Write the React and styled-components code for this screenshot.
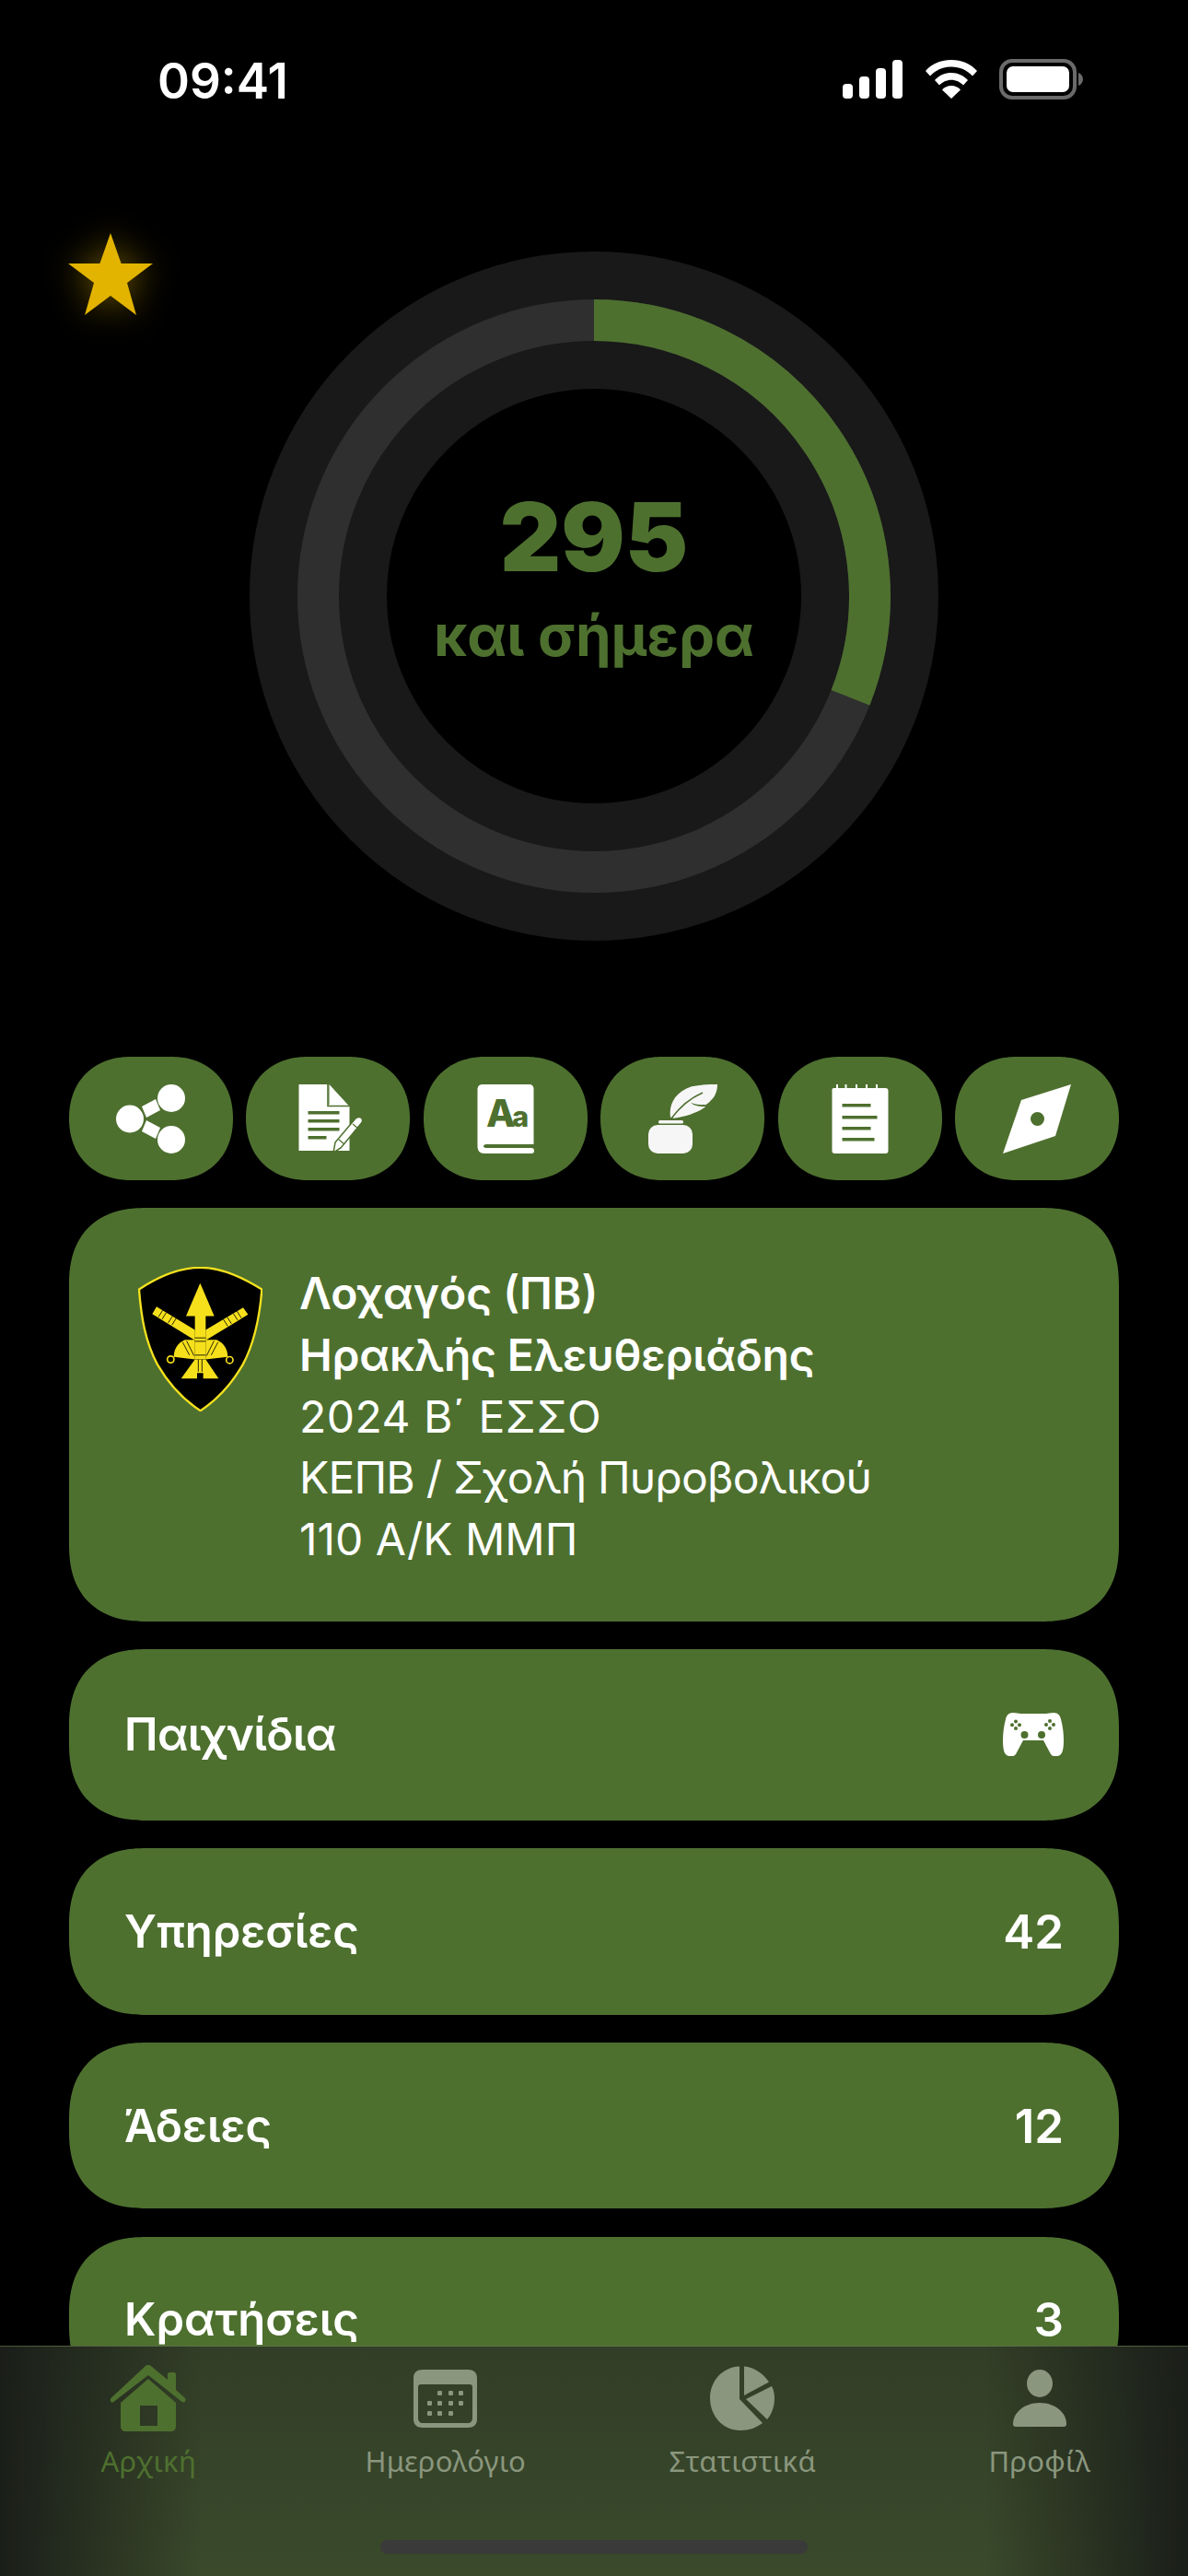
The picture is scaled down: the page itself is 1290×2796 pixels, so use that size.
import React from 'react';
import styled, { createGlobalStyle } from 'styled-components';

const GREEN = '#4e702f';

const GlobalStyle = createGlobalStyle`
  html, body { margin: 0; padding: 0; background: #000; }
  * { box-sizing: border-box; }
`;

const Screen = styled.div`
  position: relative;
  width: 1290px;
  height: 2796px;
  overflow: hidden;
  background: #000;
  font-family: Inter, "Noto Sans", sans-serif;
  color: #fff;
`;

const StatusBar = styled.div`
  height: 130px;
  padding: 46px 113px 0 171px;
  display: flex;
  align-items: center;
  justify-content: space-between;
`;

const Clock = styled.span`
  font-family: Inter, sans-serif;
  font-size: 53px;
  font-weight: 600;
`;

const StatusIcons = styled.div`
  display: flex;
  align-items: center;
  gap: 23px;
  margin-bottom: 5px;
`;

const Hero = styled.section`
  position: relative;
  display: flex;
  justify-content: center;
  margin-top: 143px;
`;

const Ring = styled.svg`
  display: block;
  width: 748px;
  height: 748px;
`;

const FavStar = styled.svg`
  position: absolute;
  left: 74px;
  top: -20px;
  width: 92px;
  height: 89px;
  filter: drop-shadow(0 0 18px rgba(226, 180, 0, 0.45));
`;

const RingLabel = styled.div`
  position: absolute;
  top: 258px;
  left: 0;
  right: 0;
  display: flex;
  flex-direction: column;
  align-items: center;
  color: ${GREEN};
`;

const DayCount = styled.div`
  font-family: Inter, sans-serif;
  font-size: 103px;
  font-weight: 900;
  line-height: 104px;
`;

const DayCaption = styled.div`
  font-family: Inter, sans-serif;
  font-size: 62px;
  font-weight: 700;
  line-height: 72px;
  margin-top: 19px;
`;

const Content = styled.main`
  display: flex;
  flex-direction: column;
  padding: 0 75px;
  margin-top: 126px;
`;

const Shortcuts = styled.div`
  display: grid;
  grid-template-columns: repeat(6, 178px);
  justify-content: space-between;
`;

const Shortcut = styled.button`
  height: 134px;
  padding: 0;
  border: none;
  border-radius: 67px;
  corner-shape: superellipse(1.12);
  background: ${GREEN};
  display: flex;
  align-items: center;
  justify-content: center;
`;

const ShortcutIcon = styled.svg`
  display: block;
  width: 80px;
  height: 75px;
`;

const InfoCard = styled.section`
  margin-top: 30px;
  height: 449px;
  padding: 60px 75px 0;
  border-radius: 84px;
  corner-shape: superellipse(1.25);
  background: ${GREEN};
  display: flex;
  gap: 40px;
  align-items: flex-start;
`;

const Emblem = styled.svg`
  flex: none;
  width: 135px;
  height: 157px;
  margin-top: 4px;
`;

const InfoLines = styled.div`
  display: flex;
  flex-direction: column;
`;

const InfoLine = styled.div`
  font-size: 48px;
  line-height: 66.75px;
  font-weight: ${(p) => (p.$strong ? 600 : 400)};
  letter-spacing: ${(p) => p.$tracking || 0}px;
`;

const StatRows = styled.div`
  display: flex;
  flex-direction: column;
  gap: 30.5px;
  margin-top: 30px;
`;

const StatRow = styled.div`
  height: ${(p) => p.$height}px;
  flex: none;
  padding: 0 60px;
  border-radius: 84px;
  corner-shape: superellipse(1.25);
  background: ${GREEN};
  display: flex;
  align-items: center;
  justify-content: space-between;
  font-size: 51px;
  font-weight: 600;
`;

const RowLabel = styled.span`
  font-size: 49px;
  letter-spacing: ${(p) => p.$tracking || 0}px;
`;

const TabBar = styled.nav`
  position: absolute;
  left: 0;
  right: 0;
  bottom: 0;
  height: 250px;
  border-top: 1.5px solid rgba(160, 190, 120, 0.35);
  background:
    linear-gradient(90deg, #1b1e19 0, rgba(27, 30, 25, 0) 17%, rgba(27, 30, 25, 0) 83%, #1b1e19 100%),
    linear-gradient(180deg, #323e27 0, #3a4a2b 100%);
  display: grid;
  grid-template-columns: repeat(4, 1fr);
  align-items: start;
`;

const Tab = styled.div`
  display: flex;
  flex-direction: column;
  align-items: center;
  color: ${(p) => (p.$active ? GREEN : '#8a967e')};
`;

const TabIconBox = styled.div`
  height: 94px;
  margin-top: 9px;
  display: flex;
  align-items: center;
  justify-content: center;
`;

const TabLabel = styled.div`
  font-family: "Noto Sans", sans-serif;
  font-size: 31px;
  letter-spacing: 0.3px;
  line-height: 40px;
  margin-top: 1px;
`;

const HomeIndicator = styled.div`
  position: absolute;
  left: 413px;
  bottom: 24px;
  width: 464px;
  height: 15px;
  border-radius: 8px;
  background: #3a3a3a;
`;

const Signal = () => (
  <svg width="66" height="42" viewBox="0 0 66 42" fill="#fff">
    <rect x="0" y="26" width="11" height="16" rx="4" />
    <rect x="18" y="18" width="11" height="24" rx="4" />
    <rect x="36" y="9" width="11" height="33" rx="4" />
    <rect x="54" y="0" width="11" height="42" rx="4" />
  </svg>
);

const Wifi = () => (
  <svg width="58" height="42" viewBox="0 0 58 42" fill="#fff">
    <path d="M29 0C18 0 8 4 1 12l5 5.500C12 11 20 7.500 29 7.500S46 11 52 17.500L57 12C50 4 40 0 29 0z" />
    <path d="M29 14c-7 0-13.500 3-18 8l5 5.500c3.200-3.600 8-5.800 13-5.800s9.800 2.200 13 5.800l5-5.500c-4.500-5-11-8-18-8z" />
    <path d="M29 28c-4 0-7.500 1.600-10 4.400L29 42l10-9.600C36.500 29.600 33 28 29 28z" />
  </svg>
);

const Battery = () => (
  <svg width="92" height="44" viewBox="0 0 92 44">
    <rect x="2" y="2" width="80" height="40" rx="12" fill="none" stroke="#6a6a6a" strokeWidth="4" />
    <rect x="8" y="8" width="68" height="28" rx="7" fill="#fff" />
    <path d="M86 15c3 1 5 4 5 7s-2 6-5 7z" fill="#6a6a6a" />
  </svg>
);

const ShareGlyph = () => (
  <ShortcutIcon viewBox="0 0 80 75" fill="#fff">
    <circle cx="17" cy="37.500" r="15" />
    <circle cx="62" cy="15" r="15" />
    <circle cx="62" cy="60" r="15" />
    <polygon points="30,24 45,16 50,28 35,36" />
    <polygon points="35,39 50,47 45,59 30,51" />
  </ShortcutIcon>
);

const NoteGlyph = () => (
  <ShortcutIcon viewBox="0 0 80 75" fill="#fff">
    <path d="M8.500 0h32v22h1V0l22 24v48h-55z" />
    <path d="M40 0v23.500H63.500" fill="none" stroke={GREEN} strokeWidth="1.600" />
    <g fill={GREEN}>
      <rect x="18.500" y="29" width="34" height="3.500" />
      <rect x="18.500" y="38" width="34" height="3.500" />
      <rect x="18.500" y="47" width="34" height="3.500" />
      <rect x="18.500" y="56" width="20" height="3.500" />
    </g>
    <path d="M48 63L70 37c2-2 5-2 6.500-.5s1.500 4-.5 6L54 69l-8 5z" fill="#fff" stroke={GREEN} strokeWidth="1.500" />
    <path d="M52 60l6 5M67 43l6 5" stroke={GREEN} strokeWidth="1.200" />
  </ShortcutIcon>
);

const DictionaryGlyph = () => (
  <ShortcutIcon viewBox="0 0 80 75">
    <path d="M15 0h50c4 0 5.500 2 5.500 5v60H19c-2 0-3 1-3 2s1 2 3 2h49c2 0 3 1 3 3s-1 3-3 3H17C12 75 9.500 72 9.500 67V6c0-4 2-6 5.500-6z" fill="#fff" />
    <text x="19" y="46" fill={GREEN} fontFamily="Inter, sans-serif" fontWeight="800" fontSize="41">A</text>
    <text x="47" y="46" fill={GREEN} fontFamily="Inter, sans-serif" fontWeight="800" fontSize="31">a</text>
  </ShortcutIcon>
);

const InkGlyph = () => (
  <ShortcutIcon viewBox="0 0 80 75" fill="#f6f6f6">
    <rect x="3" y="44" width="48" height="31" rx="10" />
    <rect x="14" y="39" width="27" height="3.500" rx="1.500" />
    <path d="M27 35.700C25 22 32 8 50 2.300 60 0 70 0 78 0c0 6-2 13-7 17.300-2 2.700-4 3.700-5.700 5-5.300-.3-11.300-.3-16.100-2.600 2.800 3.300 10.800 4.800 16.100 4.300-7.300 6-21.300 11-34.500 12.700z" />
    <path d="M28 37C36 26 46 16 62 9" fill="none" stroke={GREEN} strokeWidth="1.600" />
  </ShortcutIcon>
);

const PadGlyph = () => (
  <ShortcutIcon viewBox="0 0 80 75">
    <path d="M11 4h3V0h2v4h7.500V0h2v4H35V0h2v4h9V0h2v4h9V0h2v4h8.500c2 0 3 1 3 3v65c0 2-1 3-3 3H12.500c-2 0-3-1-3-3V6c0-1 .5-2 1.500-2z" fill="#fff" />
    <g fill={GREEN}>
      <rect x="20.500" y="21" width="31" height="3.500" />
      <rect x="20.500" y="34" width="38" height="3.500" />
      <rect x="20.500" y="46" width="31" height="3.500" />
      <rect x="20.500" y="58" width="35" height="3.500" />
    </g>
  </ShortcutIcon>
);

const CompassGlyph = () => (
  <ShortcutIcon viewBox="0 0 80 75">
    <polygon points="77,0 60,56 3,75 23,17" fill="#fff" />
    <circle cx="40.500" cy="37.500" r="7.500" fill={GREEN} />
  </ShortcutIcon>
);

const GamepadGlyph = () => (
  <svg width="66" height="47" viewBox="0 0 66 47" fill="#fff">
    <path d="M11 0c4 0 6 1 8 1h28c2 0 4-1 8-1 5 0 7 3 8 7 2 8 3 15 3 23 0 8-1 14-4 16-3 2-8 2-10-1l-8-15H22l-8 15c-2 3-7 3-10 1-3-2-4-8-4-16C0 22 1 15 3 7c1-4 3-7 8-7z" />
    <g fill={GREEN}>
      <circle cx="23.500" cy="24" r="4" />
      <circle cx="42" cy="24" r="4" />
      <circle cx="14" cy="9.500" r="2" />
      <circle cx="14" cy="17" r="2" />
      <circle cx="10" cy="13.300" r="2" />
      <circle cx="18" cy="13.300" r="2" />
      <circle cx="51" cy="9" r="2" />
      <circle cx="51" cy="17" r="2" />
      <circle cx="47" cy="13" r="2" />
      <circle cx="55" cy="13" r="2" />
    </g>
  </svg>
);

const ArtilleryEmblem = () => (
  <Emblem viewBox="60 45 405 470">
    <path d="M63 118C120 80 190 47 263 47c72 0 140 33 200 71-7 90-22 170-62 245-35 60-85 115-138 150-55-35-105-90-140-150C83 288 70 208 63 118z" fill="#000" stroke="#f5e21e" strokeWidth="7" />
    <g fill="#f6e01c">
      <polygon points="120,174 245,250 245,284 106,198" />
      <polygon points="402,177 418,200 280,284 280,250" />
      <path d="M245 282H212C190 292 176 312 176 338L245 346z" />
      <path d="M280 282h36c22 10 36 30 36 56l-72 8z" />
      <polygon points="262,98 308,205 280,205 280,345 245,345 245,205 216,205" />
      <polygon points="245,346 200,408 252,408 252,390 272,390 272,408 322,408 280,346" />
    </g>
    <g stroke="#000" strokeWidth="2.500" fill="none">
      <path d="M140 186l-14 22M152 193l-14 22M172 205l-14 22M184 212l-14 22" />
      <path d="M382 189l14 22M370 196l14 22M350 208l14 22M338 216l14 22" />
      <path d="M205 290l22 42M218 286l24 48M320 290l-22 42M307 286l-24 48" />
      <path d="M245 276h35M245 287h35M245 332h35" />
      <path d="M256 346v40M268 346v40" />
    </g>
    <g fill="none" stroke="#f6e01c" strokeWidth="5">
      <circle cx="166" cy="346" r="11" />
      <circle cx="358" cy="348" r="11" />
    </g>
  </Emblem>
);

const HomeIcon = () => (
  <svg width="82" height="72" viewBox="0 0 82 72" fill={GREEN}>
    <path d="M41 0c1.500 0 2.500 .5 3.500 1.500L62 16V10c0-1 1-2 2-2h5c1 0 2 1 2 2v17l9.500 8.500c1.500 1.500 1.500 3 .5 4-1 1.200-2.500 1.200-4 0L41 11 4 39.500c-1.500 1.200-3 1.200-4 0s-.5-2.500 .5-3.500L37.500 1.500C38.500 .5 39.500 0 41 0z" />
    <path fillRule="evenodd" d="M41 15l30 26v25c0 4-2 6-6 6H17c-4 0-6-2-6-6V41zM32 44v22h19V44z" />
  </svg>
);

const CalendarIcon = () => (
  <svg width="69" height="63" viewBox="0 0 69 63">
    <path fillRule="evenodd" fill="currentColor" d="M10 0h49c6 0 10 3 10 9v45c0 6-4 9-10 9H10C4 63 0 60 0 54V9C0 3 4 0 10 0zM8 16c-2 0-3 1-3 3v33c0 4 2 6 5 6h49c3 0 5-2 5-6V19c0-2-1-3-3-3z" />
    <g fill="currentColor">
      <rect x="26" y="23" width="5" height="5" rx="1" />
      <rect x="38" y="23" width="5" height="5" rx="1" />
      <rect x="49" y="23" width="5" height="5" rx="1" />
      <rect x="15" y="34" width="5" height="5" rx="1" />
      <rect x="26" y="34" width="5" height="5" rx="1" />
      <rect x="38" y="34" width="5" height="5" rx="1" />
      <rect x="49" y="34" width="5" height="5" rx="1" />
      <rect x="15" y="45" width="5" height="5" rx="1" />
      <rect x="26" y="45" width="5" height="5" rx="1" />
      <rect x="38" y="45" width="5" height="5" rx="1" />
    </g>
  </svg>
);

const PieIcon = () => (
  <svg width="70" height="70" viewBox="0 0 70 70" fill="currentColor">
    <path d="M32 .5V36L57 62C50 67 43 70 33 70 14 70 0 54 0 35S14 1 32 .5z" />
    <path d="M37 .5c11 1 20 7 27 17L37 32z" />
    <path d="M67 22c2 4 3 8 3 13 0 9-3 17-8 23L39 36z" />
  </svg>
);

const PersonIcon = () => (
  <svg width="58" height="62" viewBox="0 0 58 62" fill="currentColor">
    <ellipse cx="29" cy="15" rx="14" ry="15" />
    <path d="M29 36c17 0 29 11 29 23 0 2-1 3-3 3H3c-2 0-3-1-3-3 0-12 12-23 29-23z" />
  </svg>
);

const SHORTCUTS = [ShareGlyph, NoteGlyph, DictionaryGlyph, InkGlyph, PadGlyph, CompassGlyph];

const INFO = [
  { text: 'Λοχαγός (ΠΒ)', strong: true },
  { text: 'Ηρακλής Ελευθεριάδης', strong: true, tracking: -0.2 },
  { text: '2024 Β΄ ΕΣΣΟ', tracking: 0.5 },
  { text: 'ΚΕΠΒ / Σχολή Πυροβολικού', tracking: -0.8 },
  { text: '110 Α/Κ ΜΜΠ' },
];

const ROWS = [
  { label: 'Παιχνίδια', value: <GamepadGlyph />, height: 185.5, tracking: -0.6 },
  { label: 'Υπηρεσίες', value: '42', height: 180.5 },
  { label: 'Άδειες', value: '12', height: 180 },
  { label: 'Κρατήσεις', value: '3', height: 180 },
];

const TABS = [
  { label: 'Αρχική', Icon: HomeIcon, active: true },
  { label: 'Ημερολόγιο', Icon: CalendarIcon },
  { label: 'Στατιστικά', Icon: PieIcon },
  { label: 'Προφίλ', Icon: PersonIcon },
];

const App = () => {
  // progress arc, from 12 o'clock clockwise
  const angle = (111.6 * Math.PI) / 180;
  const r = 299.5;
  const endX = 374 + r * Math.sin(angle);
  const endY = 374 - r * Math.cos(angle);

  return (
    <Screen>
      <GlobalStyle />
      <StatusBar>
        <Clock>09:41</Clock>
        <StatusIcons>
          <Signal />
          <Wifi />
          <Battery />
        </StatusIcons>
      </StatusBar>

      <Hero>
        <FavStar viewBox="0 0 92 89">
          <polygon points="46,0 57.600,33 92,33 64,54 74,89 46,68 18,89 28,54 0,33 34.400,33" fill="#e2b400" />
        </FavStar>
        <Ring viewBox="0 0 748 748" fill="none">
          <circle cx="374" cy="374" r="299.500" stroke="#191919" strokeWidth="149" />
          <circle cx="374" cy="374" r="299.500" stroke="#2f2f2f" strokeWidth="45" />
          <path d={`M374 ${374 - r}A${r} ${r} 0 0 1 ${endX} ${endY}`} stroke={GREEN} strokeWidth="45" />
        </Ring>
        <RingLabel>
          <DayCount>295</DayCount>
          <DayCaption>και σήμερα</DayCaption>
        </RingLabel>
      </Hero>

      <Content>
        <Shortcuts>
          {SHORTCUTS.map((Glyph, i) => (
            <Shortcut key={i}>
              <Glyph />
            </Shortcut>
          ))}
        </Shortcuts>

        <InfoCard>
          <ArtilleryEmblem />
          <InfoLines>
            {INFO.map((line) => (
              <InfoLine key={line.text} $strong={line.strong} $tracking={line.tracking}>{line.text}</InfoLine>
            ))}
          </InfoLines>
        </InfoCard>

        <StatRows>
          {ROWS.map((row) => (
            <StatRow key={row.label} $height={row.height}>
              <RowLabel $tracking={row.tracking}>{row.label}</RowLabel>
              {row.value}
            </StatRow>
          ))}
        </StatRows>
      </Content>

      <TabBar>
        {TABS.map(({ label, Icon, active }) => (
          <Tab key={label} $active={active}>
            <TabIconBox>
              <Icon />
            </TabIconBox>
            <TabLabel>{label}</TabLabel>
          </Tab>
        ))}
      </TabBar>
      <HomeIndicator />
    </Screen>
  );
};

export default App;
